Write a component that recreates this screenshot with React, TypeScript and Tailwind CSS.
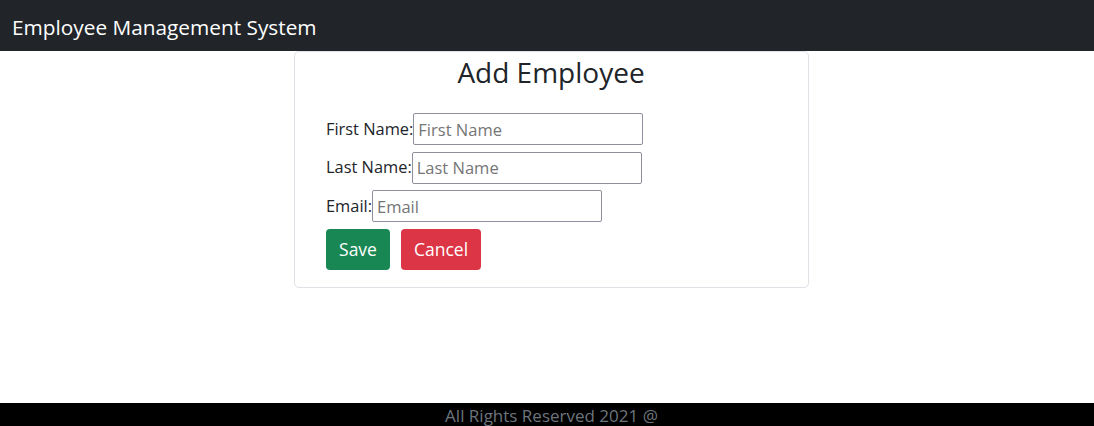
const fieldRows = [
  { label: "First Name:", placeholder: "First Name" },
  { label: "Last Name:", placeholder: "Last Name" },
  { label: "Email:", placeholder: "Email" },
];

export default function App() {
  return (
    <div className="min-h-[426px] flex flex-col bg-white font-['Open_Sans',sans-serif] text-[#212529]">
      <header className="h-[51px] bg-[#212529] flex items-center px-3">
        <span className="text-white text-[20.8px] leading-none pt-[3px]">
          Employee Management System
        </span>
      </header>

      <main className="flex-1">
        <div className="ml-[294px] w-[515px] h-[237px] border border-[#dee2e6] rounded-[5px]">
          <h2 className="text-center text-[28px] leading-none pt-[6px] pr-[1px]">
            Add Employee
          </h2>
          <form className="pl-[31px] pt-[27px] flex flex-col gap-[6.5px]">
            {fieldRows.map((row) => (
              <div key={row.label} className="flex items-center h-[32px]">
                <label className="text-[16.4px]">{row.label}</label>
                <input
                  type="text"
                  placeholder={row.placeholder}
                  className="w-[230px] h-[32px] border border-[#8f8f9d] rounded-[2px] px-1 text-[16.5px] placeholder:text-[#757575] outline-none"
                />
              </div>
            ))}
            <div className="flex gap-[11px]">
              <button
                type="button"
                className="w-[64px] h-[41px] rounded-[4px] bg-[#198754] text-white text-[17.5px]"
              >
                Save
              </button>
              <button
                type="button"
                className="w-[80px] h-[41px] rounded-[4px] bg-[#dc3545] text-white text-[17.5px]"
              >
                Cancel
              </button>
            </div>
          </form>
        </div>
      </main>

      <footer className="h-[23px] bg-black overflow-hidden flex justify-center pl-[9px]">
        <span className="text-[#6c757d] text-[17px] leading-none pt-[4px]">
          All Rights Reserved 2021 @
        </span>
      </footer>
    </div>
  );
}
